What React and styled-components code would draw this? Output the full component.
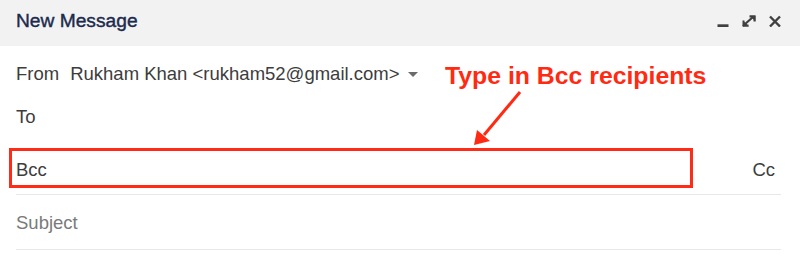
import React from 'react';
import styled, { createGlobalStyle } from 'styled-components';

const Global = createGlobalStyle`
    html, body {
        margin: 0;
        padding: 0;
        background: #ffffff;
    }
    body {
        font-family: 'Liberation Sans', Arial, sans-serif;
    }
`;

const Window = styled.div`
    position: relative;
    width: 800px;
    height: 277px;
    overflow: hidden;
    background: #ffffff;
`;

const Header = styled.header`
    display: flex;
    align-items: center;
    justify-content: space-between;
    height: 46px;
    box-sizing: border-box;
    padding: 0 19px 5px 16px;
    background: #f2f2f2;
`;

const Title = styled.h1`
    margin: 0;
    font-size: 19.2px;
    line-height: 21px;
    font-weight: 400;
    color: #1c2a4d;
    -webkit-text-stroke: 0.4px #1c2a4d;
`;

const Controls = styled.div`
    display: flex;
    align-items: center;
    gap: 13px;
    color: #404040;

    & > svg {
        display: block;
    }
`;

const Row = styled.div`
    position: relative;
    display: flex;
    align-items: flex-start;
    height: ${(p) => p.$height}px;
    box-sizing: border-box;
    margin: 0 19px 0 16px;
    padding-top: ${(p) => p.$top}px;
    border-bottom: ${(p) => (p.$line ? '1px solid #e8e8e8' : 'none')};
    font-size: 18.5px;
    line-height: 21px;
    color: #3d3d3d;
`;

const Label = styled.span`
    color: ${(p) => (p.$muted ? '#7a7a7a' : '#3d3d3d')};
    margin-right: ${(p) => p.$gap || 0}px;
`;

const Sender = styled.span`
    color: #3d3d3d;
`;

const Caret = styled.span`
    width: 0;
    height: 0;
    margin: 9px 0 0 8px;
    border-left: 5px solid transparent;
    border-right: 5px solid transparent;
    border-top: 5px solid #6b6b6b;
`;

const Spacer = styled.span`
    flex: 1;
`;

const Highlight = styled.div`
    position: absolute;
    left: -7px;
    top: 4px;
    width: 684px;
    height: 40px;
    box-sizing: border-box;
    border: 3px solid #ff2b17;
    pointer-events: none;
`;

const Callout = styled.div`
    position: absolute;
    left: 445px;
    top: 64px;
    font-size: 24.8px;
    line-height: 24.5px;
    font-weight: 700;
    color: #ff2a12;
    white-space: nowrap;
`;

const Arrow = styled.svg`
    position: absolute;
    left: 0;
    top: 0;
    pointer-events: none;
`;

const MinimizeIcon = () => (
    <svg width="12" height="12" viewBox="0 0 12 12">
        <rect x="0.5" y="9.3" width="11" height="2.8" fill="currentColor" />
    </svg>
);

const ExpandIcon = () => (
    <svg width="14" height="12" viewBox="0 0 14 12">
        <path d="M7.5 0.5h6v6z" fill="currentColor" />
        <path d="M1 5.5v6h6z" fill="currentColor" />
        <path d="M1.5 10.5l-0.5 0.5M2.5 9.5l8.5-7.5" stroke="currentColor" strokeWidth="2.2" />
        <path d="M7.5 1.5h5v5M1.5 5.5v5h5" fill="none" stroke="currentColor" strokeWidth="2" />
    </svg>
);

const CloseIcon = () => (
    <svg width="12" height="12" viewBox="0 0 12 12">
        <path d="M1 1.5l10 10M11 1.5L1 11.5" stroke="currentColor" strokeWidth="2.4" />
    </svg>
);

const App = () => (
    <>
        <Global />
        <Window>
            <Header>
                <Title>New Message</Title>
                <Controls>
                    <MinimizeIcon />
                    <ExpandIcon />
                    <CloseIcon />
                </Controls>
            </Header>

            <Row $height={44} $top={17}>
                <Label $gap={11}>From</Label>
                <Sender>Rukham Khan &lt;rukham52@gmail.com&gt;</Sender>
                <Caret />
            </Row>

            <Row $height={54} $top={16}>
                <Label>To</Label>
            </Row>

            <Row $height={51} $top={15} $line>
                <Label>Bcc</Label>
                <Spacer />
                <Label $gap={6}>Cc</Label>
                <Highlight />
            </Row>

            <Row $height={55} $top={17} $line>
                <Label $muted>Subject</Label>
            </Row>

            <Callout>Type in Bcc recipients</Callout>
            <Arrow width="800" height="277" viewBox="0 0 800 277">
                <line x1="520" y1="92" x2="484" y2="135" stroke="#ff2a12" strokeWidth="3" />
                <polygon points="474,145 477,130 490,141" fill="#ff2a12" />
            </Arrow>
        </Window>
    </>
);

export default App;
